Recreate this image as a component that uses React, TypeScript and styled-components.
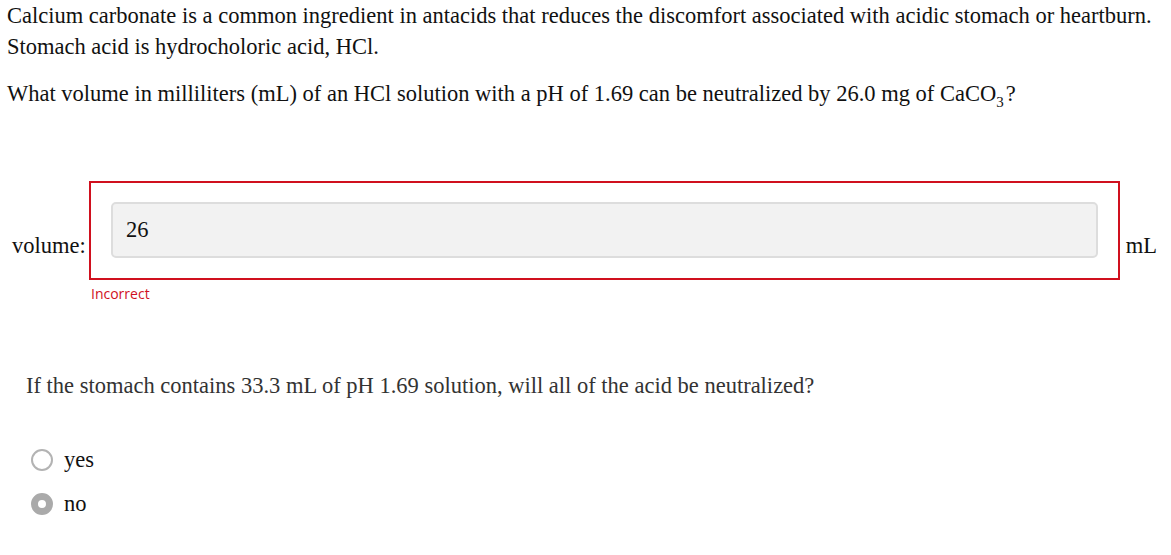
import React from 'react'
import styled, { createGlobalStyle } from 'styled-components'

const GlobalStyle = createGlobalStyle`
  html, body {
    margin: 0;
    padding: 0;
    background: #ffffff;
  }
  body {
    font-family: "Liberation Serif", "Times New Roman", serif;
    font-size: 22.5px;
    color: #111111;
  }
`

const Page = styled.div`
  padding: 0 7px;
`

const Paragraph = styled.p`
  margin: 0 0 16px 0;
  line-height: 31px;
`

const Sub = styled.sub`
  font-size: 15px;
  line-height: 0;
  vertical-align: -6px;
  margin-right: 2px;
`

const AnswerRow = styled.div`
  display: flex;
  align-items: flex-start;
  margin: 72px 7px 0 5px;
`

const Label = styled.span`
  width: 77px;
  line-height: 31px;
  padding-top: 49px;
`

const Field = styled.div`
  flex: 1;
  display: flex;
  flex-direction: column;
`

const Box = styled.div`
  border: 2px solid #d0101e;
  padding: 19px 20px 20px 20px;
`

const Input = styled.div`
  height: 52px;
  border: 2px solid #dddddd;
  border-radius: 5px;
  background: #f2f2f2;
  display: flex;
  align-items: center;
  padding-left: 13px;
`

const Feedback = styled.div`
  margin: 5px 0 0 2px;
  font-family: "Open Sans", "Noto Sans", sans-serif;
  font-size: 14px;
  line-height: 18px;
  color: #d0101e;
`

const Unit = styled.span`
  margin-left: 6px;
  line-height: 31px;
  padding-top: 49px;
`

const Question = styled.p`
  margin: 67px 0 0 19px;
  line-height: 31px;
  color: #333333;
`

const Options = styled.div`
  display: flex;
  flex-direction: column;
  gap: 13px;
  margin: 43px 0 0 24px;
`

const Option = styled.label`
  display: flex;
  align-items: center;
  gap: 11px;
  line-height: 31px;
`

const Radio = styled.span<{ $checked?: boolean }>`
  box-sizing: border-box;
  width: 22px;
  height: 22px;
  border-radius: 50%;
  border: ${(p) => (p.$checked ? '7px solid #aaaaaa' : '2px solid #b3b3b3')};
  background: #ffffff;
`

export default function App() {
  return (
    <Page>
      <GlobalStyle />
      <Paragraph>
        Calcium carbonate is a common ingredient in antacids that reduces the discomfort associated with acidic
        stomach or heartburn.
        <br />
        Stomach acid is hydrocholoric acid, HCl.
      </Paragraph>
      <Paragraph>
        What volume in milliliters (mL) of an HCl solution with a pH of 1.69 can be neutralized by 26.0 mg of CaCO
        <Sub>3</Sub>?
      </Paragraph>
      <AnswerRow>
        <Label>volume:</Label>
        <Field>
          <Box>
            <Input>26</Input>
          </Box>
          <Feedback>Incorrect</Feedback>
        </Field>
        <Unit>mL</Unit>
      </AnswerRow>
      <Question>If the stomach contains 33.3 mL of pH 1.69 solution, will all of the acid be neutralized?</Question>
      <Options>
        <Option>
          <Radio />
          yes
        </Option>
        <Option>
          <Radio $checked />
          no
        </Option>
      </Options>
    </Page>
  )
}
